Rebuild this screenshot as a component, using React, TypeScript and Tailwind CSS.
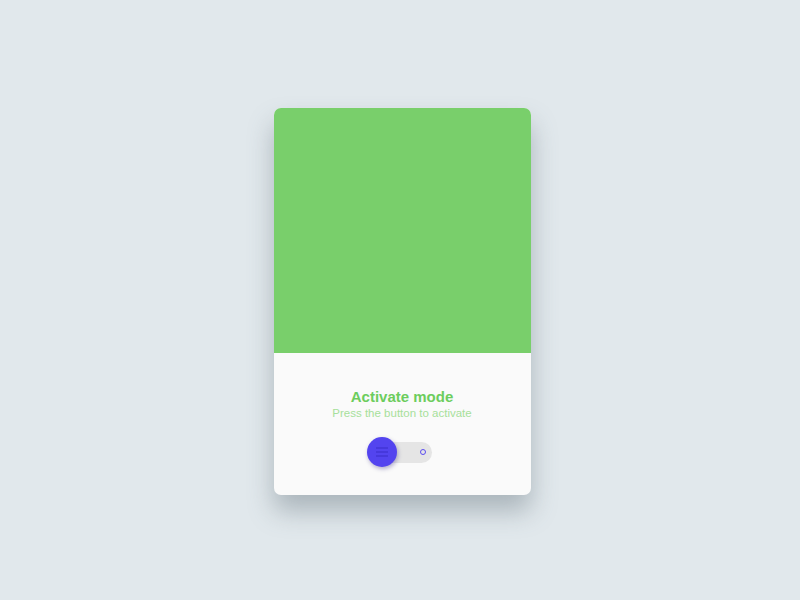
import { useState } from 'react';

export default function App() {
  const [active, setActive] = useState(false);

  return (
    <div className="flex h-[600px] w-[800px] items-center justify-center bg-[#e1e8ec] font-['Liberation_Sans',Arial,sans-serif]">
      <div className="mt-[2px] ml-[4px] flex h-[387px] w-[257px] flex-col overflow-hidden rounded-[7px] bg-[#fafafa] shadow-[0_16px_26px_rgba(90,105,115,0.4)]">
        <div className="h-[245px] bg-[#79cf6b]" />
        <div className="flex flex-1 flex-col items-center pt-[35px]">
          <h2 className="text-[15px] font-bold leading-[18px] text-[#6ccd5d]">Activate mode</h2>
          <p className="text-[11.5px] font-light leading-[14px] text-[#a7e09b]">Press the button to activate</p>

          <button
            onClick={() => setActive(!active)}
            className="relative mt-[22px] ml-[2px] flex h-[21px] w-[57px] items-center justify-end rounded-full bg-[#e5e5e5] pr-[6px]"
          >
            <span className="h-[6px] w-[6px] rounded-full border border-[#5b4cf0]" />
            <span className="absolute left-[-8px] top-1/2 flex h-[30px] w-[30px] -translate-y-1/2 flex-col items-center justify-center gap-[2px] rounded-full bg-[#5344ef] shadow-[1px_2px_4px_rgba(40,30,120,0.35)]">
              <span className="h-[2px] w-[12px] bg-[#4638dc]" />
              <span className="h-[2px] w-[12px] bg-[#4638dc]" />
              <span className="h-[2px] w-[12px] bg-[#4638dc]" />
            </span>
          </button>
        </div>
      </div>
    </div>
  );
}
